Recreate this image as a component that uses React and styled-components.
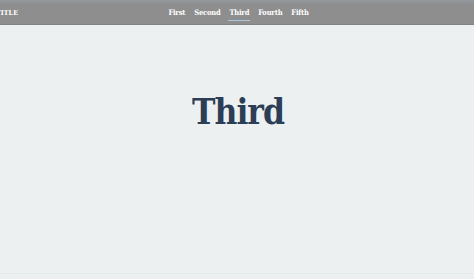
import React from "react"
import styled, { createGlobalStyle } from 'styled-components'

const Global = createGlobalStyle`
	html, body {
		margin: 0;
		padding: 0;
		background: #ecf0f1;
		font-family: "DejaVu Serif", "Liberation Serif", serif;
		font-stretch: condensed;
	}
`

const Page = styled.div`
	height: 279px;
	display: flex;
	flex-direction: column;
	overflow: hidden;
`

const Header = styled.header`
	position: relative;
	height: 24px;
	display: flex;
	align-items: center;
	justify-content: center;
	background: linear-gradient(#939a9f 0, #8f9295 3px, #8e8e8e 4px);
	border-bottom: 1px solid #7f8385;
`

const Brand = styled.div`
	position: absolute;
	left: -4px;
	top: 8px;
	color: #fff;
	font-size: 7px;
	font-weight: bold;
	letter-spacing: 0.1px;
`

const Nav = styled.nav`
	display: flex;
	gap: 9px;
	margin: 2px 0 0 3px;
`

const NavItem = styled.a`
	position: relative;
	color: #fff;
	font-size: 7.5px;
	font-weight: bold;
	letter-spacing: -0.2px;
	padding: 3px 0 4px;
	${p => p.$active && `
		&::after {
			content: '';
			position: absolute;
			left: -1px;
			right: -1px;
			bottom: 0;
			height: 1px;
			background: #a9c6e0;
		}
	`}
`

const Main = styled.main`
	flex: 1;
	display: flex;
	justify-content: center;
	padding-top: 69px;
`

const Heading = styled.h1`
	margin: 0 0 0 2px;
	color: #2c3e55;
	font-size: 35px;
	font-weight: bold;
	letter-spacing: -1px;
	line-height: 1;
`

const Footer = styled.div`
	height: 5px;
	margin: 0 2px;
	border-top: 1px solid #e4e9ea;
`

const links = ['First', 'Second', 'Third', 'Fourth', 'Fifth']

const App = () => (
	<Page>
		<Global />
		<Header>
			<Brand>TITLE</Brand>
			<Nav>
				{links.map(l => (
					<NavItem key={l} $active={l === 'Third'}>{l}</NavItem>
				))}
			</Nav>
		</Header>
		<Main>
			<Heading>Third</Heading>
		</Main>
		<Footer />
	</Page>
)

export default App
